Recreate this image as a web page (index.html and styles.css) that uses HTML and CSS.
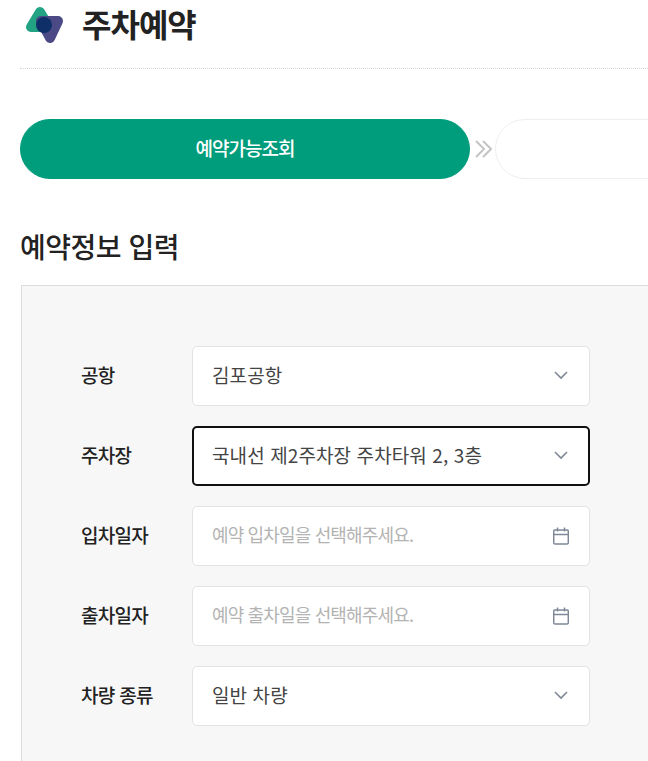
FILE: index.html
```html
<!DOCTYPE html>
<html lang="ko">
<head>
    <meta charset="UTF-8">
    <meta name="viewport" content="width=device-width, initial-scale=1.0">
    <title>주차예약</title>
    <link rel="stylesheet" href="styles.css">
</head>
<body>
    <header class="page-head">
        <svg class="logo" width="40" height="40" viewBox="0 0 40 40">
            <polygon points="15,6 6,21 24,21" fill="#22a384" stroke="#22a384" stroke-width="10" stroke-linejoin="round"/>
            <polygon points="16,15 33,15 25,32" fill="#4b4a86" stroke="#4b4a86" stroke-width="10" stroke-linejoin="round"/>
            <circle cx="19" cy="19" r="8" fill="#0f2f68"/>
        </svg>
        <h1 class="page-title">주차예약</h1>
    </header>

    <div class="steps">
        <div class="step step-on">예약가능조회</div>
        <svg class="step-arrow" width="19" height="20" viewBox="0 0 19 20">
            <path d="M3 2l8 8-8 8M10 2l8 8-8 8" fill="none" stroke="#c4c4c4" stroke-width="2"/>
        </svg>
        <div class="step"></div>
    </div>

    <h2 class="section-title">예약정보 입력</h2>

    <section class="form-box">
        <div class="form-row">
            <label class="form-label">공항</label>
            <div class="field">
                <span>김포공항</span>
                <svg class="chevron" width="16" height="16" viewBox="0 0 16 16"><path d="M2 5l6 6 6-6" fill="none" stroke="#7f8796" stroke-width="1.600"/></svg>
            </div>
        </div>
        <div class="form-row">
            <label class="form-label">주차장</label>
            <div class="field field-focus">
                <span>국내선 제2주차장 주차타워 2, 3층</span>
                <svg class="chevron" width="16" height="16" viewBox="0 0 16 16"><path d="M2 5l6 6 6-6" fill="none" stroke="#7f8796" stroke-width="1.600"/></svg>
            </div>
        </div>
        <div class="form-row">
            <label class="form-label">입차일자</label>
            <div class="field">
                <span class="placeholder">예약 입차일을 선택해주세요.</span>
                <svg class="calendar" width="16" height="18" viewBox="0 0 16 18"><path d="M2 3h12a1.300 1.300 0 0 1 1.300 1.300v11.400A1.300 1.300 0 0 1 14 17H2a1.300 1.300 0 0 1-1.300-1.300V4.300A1.300 1.300 0 0 1 2 3zM.7 7.500h14.600M4.500 .5v4M11.500 .5v4" fill="none" stroke="#7f8796" stroke-width="1.500"/></svg>
            </div>
        </div>
        <div class="form-row">
            <label class="form-label">출차일자</label>
            <div class="field">
                <span class="placeholder">예약 출차일을 선택해주세요.</span>
                <svg class="calendar" width="16" height="18" viewBox="0 0 16 18"><path d="M2 3h12a1.300 1.300 0 0 1 1.300 1.300v11.400A1.300 1.300 0 0 1 14 17H2a1.300 1.300 0 0 1-1.300-1.300V4.300A1.300 1.300 0 0 1 2 3zM.7 7.500h14.600M4.500 .5v4M11.500 .5v4" fill="none" stroke="#7f8796" stroke-width="1.500"/></svg>
            </div>
        </div>
        <div class="form-row">
            <label class="form-label">차량 종류</label>
            <div class="field">
                <span>일반 차량</span>
                <svg class="chevron" width="16" height="16" viewBox="0 0 16 16"><path d="M2 5l6 6 6-6" fill="none" stroke="#7f8796" stroke-width="1.600"/></svg>
            </div>
        </div>
    </section>
</body>
</html>
```

FILE: styles.css
```css
html, body {
    height: 761px;
    overflow: hidden;
}
body {
    margin: 0;
    background: #fff;
    font-family: "Noto Sans CJK KR", "Noto Sans", sans-serif;
    color: #222;
}
.page-head {
    display: flex;
    align-items: center;
    gap: 17px;
    height: 69px;
    margin-left: 20px;
    padding-bottom: 23px;
    box-sizing: border-box;
    border-bottom: 1px dotted #d5d5d5;
}
.logo {
    flex: none;
    margin-left: 5px;
    margin-top: 7px;
}
.page-title {
    margin: 0;
    font-size: 32px;
    font-weight: 700;
    letter-spacing: -1px;
    line-height: 50px;
}
.steps {
    display: flex;
    align-items: center;
    gap: 3px;
    width: 700px;
    margin: 50px 0 0 20px;
}
.step {
    flex: none;
    box-sizing: border-box;
    width: 450px;
    height: 60px;
    border: 1px solid #eee;
    border-radius: 30px;
    text-align: center;
    font-size: 19px;
    font-weight: 500;
    letter-spacing: -1px;
    line-height: 56px;
}
.step-on {
    background: #009d7c;
    border-color: #009d7c;
    color: #fff;
}
.step-arrow {
    flex: none;
}
.section-title {
    margin: 47px 0 0 20px;
    font-size: 28px;
    font-weight: 500;
    letter-spacing: -.5px;
    line-height: 40px;
}
.form-box {
    display: flex;
    flex-direction: column;
    gap: 20px;
    box-sizing: border-box;
    width: 700px;
    height: 500px;
    margin: 19px 0 0 21px;
    padding: 60px 0 0 59px;
    background: #f7f7f7;
    border: 1px solid #ddd;
}
.form-row {
    display: flex;
    align-items: center;
}
.form-label {
    width: 111px;
    padding-bottom: 4px;
    font-size: 19px;
    font-weight: 500;
    letter-spacing: -.7px;
}
.field {
    display: flex;
    align-items: center;
    justify-content: space-between;
    box-sizing: border-box;
    width: 398px;
    height: 60px;
    padding: 0 20px 4px 19px;
    background: #fff;
    border: 1px solid #e3e3e3;
    border-radius: 5px;
    font-size: 19px;
    letter-spacing: .1px;
    color: #444;
}
.field-focus {
    border: 2px solid #111;
    padding: 0 19px 4px 18px;
}
.placeholder {
    color: #b3b3b3;
    font-size: 18px;
    letter-spacing: -.85px;
}
.chevron {
    flex: none;
    margin-top: 2px;
}
.calendar {
    flex: none;
    margin-top: 4px;
}
```
